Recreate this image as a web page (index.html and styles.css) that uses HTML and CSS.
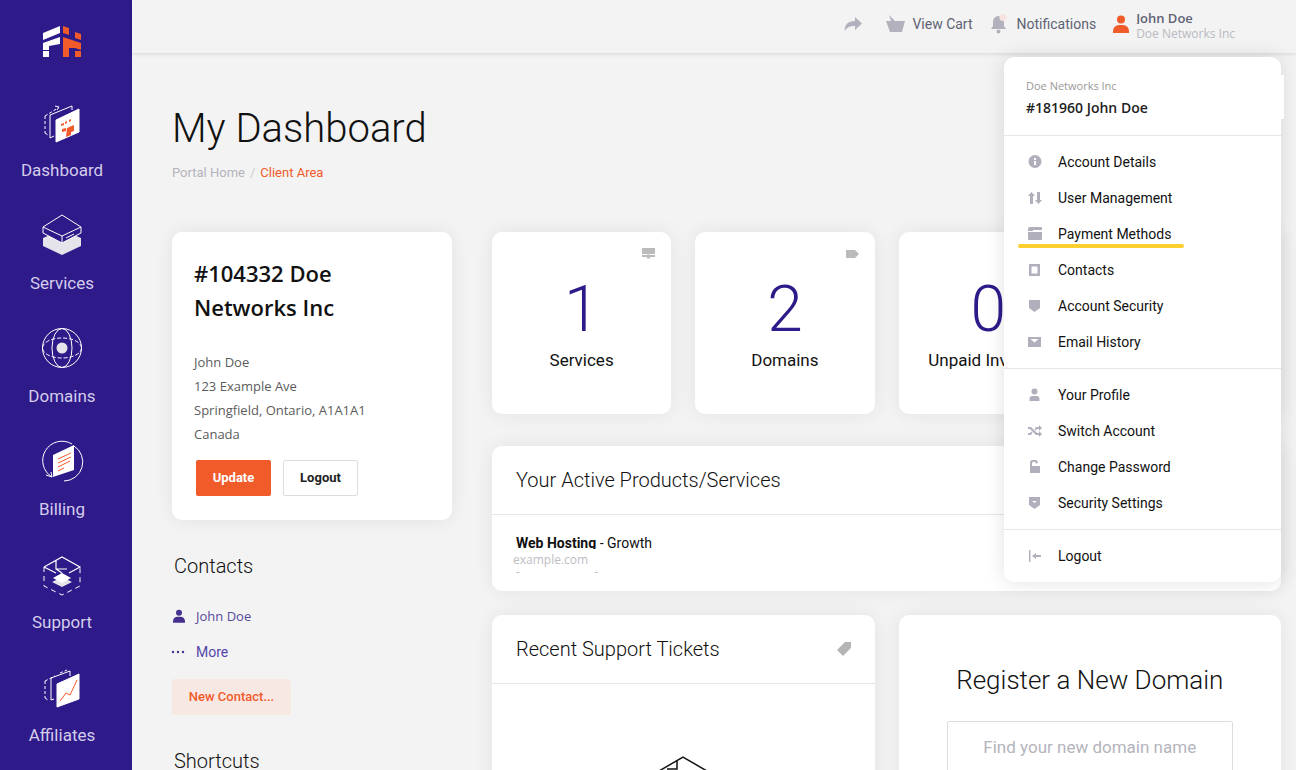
FILE: index.html
```html
<!DOCTYPE html>
<html lang="en">
<head>
  <meta charset="UTF-8">
  <meta name="viewport" content="width=device-width, initial-scale=1">
  <title>My Dashboard</title>
  <link rel="stylesheet" href="styles.css">
</head>
<body>
<div class="layout">

  <aside class="sidebar">
    <svg class="logo" width="40" height="32" viewBox="0 0 40 32">
      <path fill="#fff" d="M1 8 18 1v7L1 15zM1 18l17-6v7L7 21v4H1zM1 26h6v6H1z"/>
      <path fill="#f15a29" d="M21 1l6 2v7l-6-2zM33 7l6 2v6l-6-2zM21 12l18 6v7l-6-2h-12zM21 23h6v9h-6zM33 26h6v6h-6z"/>
    </svg>
    <nav>
      <a class="side-item" href="#">
        <svg width="40" height="40" viewBox="0 0 40 40" fill="none" stroke="#fff" stroke-width="1">
          <path d="M3 13 16 5M3 13v17M3 30l3 2" stroke-dasharray="3 2"/>
          <path d="M13 3l4 1-2 3"/>
          <path d="M8 12 30 3v4M8 12v23l4-2"/>
          <path fill="#fff" d="M14 17 37 6v23L14 39z"/>
          <path fill="#f15a29" stroke="none" d="M19 21l3-1v2l-3 1zM23 19l2-1v2l-2 1zM27 17l2-1v2l-2 1zM20 26l4-1v3l-4 1zM25 25l7-3v6l-3 1v3l-5 2z"/>
        </svg>
        <span>Dashboard</span>
      </a>
      <a class="side-item" href="#">
        <svg width="40" height="40" viewBox="0 0 40 40" fill="none" stroke="#fff" stroke-width="1">
          <path fill="#e4e4ea" stroke="none" d="M1 22 8 19 20 25 32 19 39 22V30L20 39 1 30z"/>
          <path fill="#2f1a8a" d="M1 11 20 -1 39 11V17L20 27 1 17z"/>
          <path d="M1 11 20 20 39 11M20 20v7M24 22l8-4"/>
        </svg>
        <span>Services</span>
      </a>
      <a class="side-item" href="#">
        <svg width="40" height="40" viewBox="0 0 40 40" fill="none" stroke="#fff" stroke-width="1">
          <circle cx="20" cy="19" r="19.500"/>
          <ellipse cx="20" cy="19" rx="10" ry="19.500"/>
          <ellipse cx="20" cy="19" rx="19.500" ry="10" stroke-dasharray="4 2"/>
          <circle cx="20" cy="19" r="5.500" fill="#e4e4ea" stroke="none"/>
        </svg>
        <span>Domains</span>
      </a>
      <a class="side-item" href="#">
        <svg width="40" height="40" viewBox="0 0 40 40" fill="none" stroke="#fff" stroke-width="1">
          <path d="M10 35A19 19 0 0 1 30 2M32 4A19 19 0 0 1 22 39M4 33l6 2 -1-5"/>
          <path fill="#fff" stroke="none" d="M11 13 32 3V28L11 35z"/>
          <path stroke="#f15a29" d="M16 17 29 11M16 21 29 15M16 25 28 19M16 29 22 26"/>
        </svg>
        <span>Billing</span>
      </a>
      <a class="side-item" href="#">
        <svg width="40" height="40" viewBox="0 0 40 40" fill="none" stroke="#fff" stroke-width="1">
          <path d="M2 12V31L20 40 38 31V12" stroke-dasharray="5 4"/>
          <path fill="#e4e4ea" stroke="none" d="M20 22 30 27 20 32 10 27z"/>
          <path fill="#fff" stroke="none" d="M20 18 29 23 20 28 11 23z"/>
          <path stroke-width="1.200" d="M2 12 20 2 38 12 27 18M2 12 14 18M14 5V14L25 14M14 14l6 4"/>
        </svg>
        <span>Support</span>
      </a>
      <a class="side-item" href="#">
        <svg width="40" height="40" viewBox="0 0 40 40" fill="none" stroke="#fff" stroke-width="1">
          <path d="M3 13 13 8M3 13v17M3 30l3 2M18 5l7-3" stroke-dasharray="3 2"/>
          <path d="M9 10 28 3v5M9 10v22l3-1"/>
          <path fill="#fff" d="M15 16 37 6v25L15 39z"/>
          <path stroke="#f15a29" d="M18 33 24 25l4 2 7-15"/>
        </svg>
        <span>Affiliates</span>
      </a>
    </nav>
  </aside>

  <div class="main">
    <header class="topbar">
      <svg class="top-arrow" width="18" height="14" viewBox="0 0 18 14"><path d="M11 0l7 6.500-7 6.500V9C6 9 3 10 1 14 0 8 4 4 11 4z"/></svg>
      <a class="top-link" href="#">
        <svg width="19" height="18" viewBox="0 0 19 18"><path d="M3 0l6 6h10l-3 11H4L0 6h5z"/></svg>
        View Cart
      </a>
      <a class="top-link top-notify" href="#">
        <svg width="18" height="20" viewBox="0 0 18 20"><path d="M8 2a6 6 0 0 0-5 6v4l-2 3h15l-2-3V8a6 6 0 0 0-6-6z"/><circle cx="8.500" cy="17.500" r="2"/><circle cx="13" cy="3.500" r="3.500" fill="#f6e3e0"/></svg>
        Notifications
      </a>
      <a class="top-user" href="#">
        <svg width="16" height="18" viewBox="0 0 16 18"><circle cx="8" cy="4.500" r="4"/><path d="M0 18v-2a6 6 0 0 1 6-6h4a6 6 0 0 1 6 6v2z"/></svg>
        <span class="top-user-text">
          <span class="top-user-name">John Doe</span>
          <span class="top-user-org">Doe Networks Inc</span>
        </span>
      </a>
    </header>

    <div class="content">
      <h1>My Dashboard</h1>
      <div class="breadcrumb">
        <a href="#">Portal Home</a><i>/</i><span>Client Area</span>
      </div>

      <div class="columns">
        <div class="col-left">
          <div class="card client-card">
            <h3>#104332 Doe Networks Inc</h3>
            <p>John Doe<br>123 Example Ave<br>Springfield, Ontario, A1A1A1<br>Canada</p>
            <div class="client-btns">
              <a class="btn btn-orange" href="#">Update</a>
              <a class="btn btn-white" href="#">Logout</a>
            </div>
          </div>

          <h4 class="side-title">Contacts</h4>
          <a class="contact-link" href="#">
            <svg width="12" height="14" viewBox="0 0 16 18"><circle cx="8" cy="4.500" r="4"/><path d="M0 18v-2a6 6 0 0 1 6-6h4a6 6 0 0 1 6 6v2z"/></svg>
            John Doe
          </a>
          <a class="contact-link contact-more" href="#">
            <svg width="14" height="14" viewBox="0 0 14 14"><circle cx="2" cy="7" r="1.200"/><circle cx="7" cy="7" r="1.200"/><circle cx="12" cy="7" r="1.200"/></svg>
            More
          </a>
          <a class="btn-new" href="#">New Contact...</a>

          <h4 class="side-title shortcuts">Shortcuts</h4>
        </div>

        <div class="col-right">
          <div class="stats">
            <div class="card stat">
              <svg class="stat-icon" width="13" height="12" viewBox="0 0 13 12"><path d="M0 0h13v6H0zM0 7h5V6.500H8V7h5v2H8v1.500H5V9H0z"/></svg>
              <div class="stat-num">1</div>
              <div class="stat-label">Services</div>
            </div>
            <div class="card stat">
              <svg class="stat-icon" width="13" height="12" viewBox="0 0 13 12"><path d="M0 2h9l4 4-4 4H0z"/></svg>
              <div class="stat-num">2</div>
              <div class="stat-label">Domains</div>
            </div>
            <div class="card stat">
              <div class="stat-num">0</div>
              <div class="stat-label">Unpaid Invoices</div>
            </div>
            <div class="card stat">
              <div class="stat-num">0</div>
              <div class="stat-label">Tickets</div>
            </div>
          </div>

          <div class="card panel panel-products">
            <div class="panel-head"><h3>Your Active Products/Services</h3></div>
            <div class="product-row">
              <div class="product-name"><b>Web Hosting</b> - Growth</div>
              <div class="product-domain">example.com</div>
              <div class="product-cut"><span>-</span><span>-</span></div>
            </div>
          </div>

          <div class="panel-grid">
            <div class="card panel">
              <div class="panel-head">
                <h3>Recent Support Tickets</h3>
                <svg width="14" height="14" viewBox="0 0 14 14"><path d="M0 8 8 0h6v6l-8 8z" fill="#b5b5b5"/></svg>
              </div>
              <div class="panel-empty">
                <svg width="60" height="40" viewBox="0 0 60 40" fill="none" stroke="#111" stroke-width="1.500"><path d="M1 18 30 1 59 18M24 4v9H14"/></svg>
              </div>
            </div>
            <div class="card panel domain-panel">
              <h2>Register a New Domain</h2>
              <div class="domain-input">Find your new domain name</div>
            </div>
          </div>
        </div>
      </div>
    </div>
  </div>

  <div class="user-menu">
    <div class="menu-head">
      <small>Doe Networks Inc</small>
      <strong>#181960 John Doe</strong>
    </div>
    <ul class="menu-group">
      <li><svg viewBox="0 0 14 14"><path fill-rule="evenodd" d="M7 0a6.500 6.500 0 1 1 0 13A6.500 6.500 0 0 1 7 0zM6 3v2h2V3zM6 6v4h2V6z"/></svg>Account Details</li>
      <li><svg viewBox="0 0 14 14"><path d="M3.500 1 7 5H5v8H2V5H0zM9 1h3v8h2l-3.500 4L7 9h2z"/></svg>User Management</li>
      <li class="marked"><svg viewBox="0 0 14 14"><path d="M2 0h11a1 1 0 0 1 1 1v2H5v1H0V2a2 2 0 0 1 2-2zM0 5h14v7a1 1 0 0 1-1 1H1a1 1 0 0 1-1-1z"/></svg>Payment Methods</li>
      <li><svg viewBox="0 0 14 14"><path fill-rule="evenodd" d="M1 1h11v12H1zM3.500 3.500v7h6v-7z"/></svg>Contacts</li>
      <li><svg viewBox="0 0 14 14"><path d="M1 1h11v8l-5.500 4L1 9z"/></svg>Account Security</li>
      <li><svg viewBox="0 0 14 14"><path fill-rule="evenodd" d="M0 2h13v10H0zM2.500 4l4 3.500 4-3.500z"/></svg>Email History</li>
    </ul>
    <ul class="menu-group">
      <li><svg viewBox="0 0 14 14"><circle cx="6.500" cy="3.500" r="3"/><path d="M1.500 13v-2a3 3 0 0 1 3-3h4a3 3 0 0 1 3 3v2z"/></svg>Your Profile</li>
      <li><svg viewBox="0 0 14 14"><path d="M0 3h3l6 6h2V7l3 3-3 3v-2H8L2 5H0zM11 1l3 3-3 3V5H9L7.500 6.500 6.500 5.500 8 3h3zM0 9h2l1.500-1.500 1 1L3 11H0z"/></svg>Switch Account</li>
      <li><svg viewBox="0 0 14 14"><path d="M2 6V4a4 4 0 0 1 8-1L8 3.500A2 2 0 0 0 4 4v2h8v7H2z"/></svg>Change Password</li>
      <li><svg viewBox="0 0 14 14"><path fill-rule="evenodd" d="M1 1h11v8l-5.500 4L1 9zM4 5h5l-2.500 2z"/></svg>Security Settings</li>
    </ul>
    <ul class="menu-group">
      <li><svg viewBox="0 0 14 14"><path d="M1 1h1.500v12H1zM4 7l4-3v2h5v2H8v2z"/></svg>Logout</li>
    </ul>
  </div>

</div>
</body>
</html>
```

FILE: styles.css
```css
* {
  box-sizing: border-box;
}

html, body {
  margin: 0;
  height: 100%;
  overflow: hidden;
}

body {
  font-family: Roboto, sans-serif;
  background-color: #f3f3f3;
  color: #111;
}

a {
  text-decoration: none;
  color: inherit;
}

.layout {
  display: flex;
  height: 770px;
  overflow: hidden;
  position: relative;
}

/* sidebar */
.sidebar {
  width: 132px;
  flex: none;
  background-color: #2f1a8a;
  padding: 25px 8px 0 0;
  text-align: center;
}

.logo {
  display: block;
  margin: 0 auto 46px;
}

.side-item {
  display: flex;
  flex-direction: column;
  align-items: center;
  margin-bottom: 36px;
  color: #d3cdea;
  font-size: 17px;
  line-height: 20px;
}

.side-item svg {
  display: block;
  margin-bottom: 17px;
  overflow: visible;
}

/* top bar */
.main {
  flex: 1;
  min-width: 0;
}

.topbar {
  height: 53px;
  display: flex;
  align-items: center;
  justify-content: flex-end;
  padding: 0 61px 5px 0;
  background-color: #f3f3f3;
  box-shadow: 0 1px 4px rgba(0,0,0,0.12);
  color: #5e6274;
  font-size: 14px;
  position: relative;
}

.topbar svg {
  fill: #b2b1bd;
  flex: none;
}

.top-arrow {
  margin-right: 24px;
}

.top-link {
  display: flex;
  align-items: center;
  gap: 7px;
  margin-right: 17px;
}

.top-notify {
  gap: 9px;
}

.top-user {
  display: flex;
  align-items: center;
  gap: 7px;
}

.topbar .top-user svg {
  fill: #f15a29;
}

.top-user-text {
  display: block;
  margin-top: 6px;
  font-family: "Open Sans", sans-serif;
}

.top-user-name {
  display: block;
  height: 12px;
  line-height: 13px;
  overflow: hidden;
  font-size: 13px;
  font-weight: 600;
  color: #5e6274;
}

.top-user-org {
  display: block;
  margin-top: 2px;
  font-size: 12px;
  line-height: 16px;
  color: #b9b9c2;
}

/* content */
.content {
  padding: 0 15px 0 40px;
}

h1 {
  margin: 51px 0 0;
  font-size: 40px;
  font-weight: 300;
  line-height: 50px;
  color: #111;
}

.breadcrumb {
  margin-top: 11px;
  font-size: 13px;
  line-height: 16px;
  color: #b4b4bd;
}

.breadcrumb i {
  font-style: normal;
  margin: 0 5px;
  color: #ccc;
}

.breadcrumb span {
  color: #f15a29;
}

.columns {
  display: grid;
  grid-template-columns: 280px 1fr;
  gap: 40px;
  margin-top: 51px;
}

.card {
  background-color: #fff;
  border-radius: 10px;
  box-shadow: 0 0 20px rgba(0,0,0,0.07);
}

/* left column */
.client-card {
  height: 288px;
  padding: 24px 22px;
  font-family: "Open Sans", sans-serif;
}

.client-card h3 {
  margin: 0;
  font-size: 22px;
  font-weight: 600;
  line-height: 34px;
}

.client-card p {
  margin: 26px 0 0;
  font-size: 13px;
  line-height: 24px;
  color: #5c5c5c;
}

.client-btns {
  display: flex;
  gap: 12px;
  margin: 14px 0 0 2px;
}

.btn {
  display: block;
  width: 75px;
  height: 36px;
  line-height: 36px;
  text-align: center;
  font-family: Roboto, sans-serif;
  font-size: 13px;
  font-weight: 700;
  border-radius: 2px;
}

.btn-orange {
  background-color: #f15a29;
  color: #fff;
}

.btn-white {
  background-color: #fff;
  border: 1px solid #ddd;
  line-height: 34px;
  color: #222;
}

.side-title {
  margin: 32px 2px 0;
  font-size: 20px;
  font-weight: 300;
  line-height: 28px;
}

.contact-link {
  display: flex;
  align-items: center;
  gap: 11px;
  margin: 28px 0 0 1px;
  font-size: 13px;
  line-height: 16px;
  font-family: "Open Sans", sans-serif;
  color: #564a9e;
}

.contact-link svg {
  fill: #45308f;
}

.contact-more {
  margin: 20px 0 0 -1px;
  gap: 11px;
  font-family: Roboto, sans-serif;
  font-size: 14px;
  color: #5347ab;
}

.btn-new {
  display: block;
  width: 119px;
  height: 36px;
  margin-top: 19px;
  line-height: 36px;
  text-align: center;
  font-size: 13px;
  font-weight: 500;
  color: #f15a29;
  background-color: #f7e8e4;
  border-radius: 2px;
}

.shortcuts {
  margin-top: 32px;
}

/* right column */
.stats {
  display: grid;
  grid-template-columns: repeat(4, 1fr);
  gap: 24px;
}

.stat {
  height: 182px;
  position: relative;
  text-align: center;
}

.stat-icon {
  position: absolute;
  top: 16px;
  right: 16px;
  fill: #bbb;
}

.stat-num {
  padding-top: 42px;
  font-size: 64px;
  font-weight: 300;
  line-height: 72px;
  color: #2f1a8a;
}

.stat-label {
  margin-top: 2px;
  font-size: 17px;
  line-height: 24px;
}

.panel-products {
  height: 145px;
  margin-top: 32px;
  overflow: hidden;
}

.panel-head {
  display: flex;
  align-items: center;
  justify-content: space-between;
  height: 69px;
  padding: 0 24px;
  border-bottom: 1px solid #e6e6e6;
}

.panel-head h3 {
  margin: 0;
  font-size: 20px;
  font-weight: 300;
}

.product-row {
  padding: 20px 24px 0;
}

.product-name {
  height: 14px;
  line-height: 16px;
  overflow: hidden;
  font-size: 14px;
}

.product-domain {
  margin: 3px 0 0 -3px;
  font-family: "Open Sans", sans-serif;
  font-size: 12px;
  line-height: 16px;
  color: #bdbdc4;
}

.product-cut {
  display: flex;
  justify-content: space-between;
  width: 82px;
  height: 4px;
  margin-top: 2px;
  overflow: hidden;
  font-size: 12px;
  line-height: 4px;
  color: #bdbdc4;
}

.panel-grid {
  display: grid;
  grid-template-columns: 1fr 1fr;
  gap: 24px;
  margin-top: 24px;
}

.panel-grid .card {
  height: 300px;
}

.panel-empty {
  padding-top: 72px;
  text-align: center;
}

.domain-panel {
  padding-top: 48px;
  text-align: center;
}

.domain-panel h2 {
  margin: 0;
  font-size: 26px;
  font-weight: 300;
  line-height: 34px;
}

.domain-input {
  margin: 24px 48px 0;
  height: 52px;
  line-height: 50px;
  border: 1px solid #ddd;
  border-radius: 2px;
  font-size: 17px;
  color: #b4b4bd;
}

/* user dropdown */
.user-menu {
  position: absolute;
  top: 57px;
  left: 1004px;
  width: 277px;
  height: 525px;
  background-color: #fff;
  border-radius: 10px;
  box-shadow: 0 0 20px rgba(0,0,0,0.12);
}

.user-menu::after {
  content: "";
  position: absolute;
  top: 18px;
  right: -3px;
  width: 3px;
  height: 44px;
  background-color: #fff;
}

.menu-head {
  height: 79px;
  padding: 21px 22px 0;
  font-family: "Open Sans", sans-serif;
  border-bottom: 1px solid #e6e6e6;
}

.menu-head small {
  display: block;
  font-size: 11px;
  line-height: 15px;
  color: #999;
}

.menu-head strong {
  display: block;
  margin-top: 6px;
  font-size: 14px;
  font-weight: 600;
  line-height: 18px;
  color: #222;
}

.menu-group {
  list-style: none;
  margin: 0;
  padding: 8px 0;
  border-bottom: 1px solid #e6e6e6;
}

.menu-group:last-child {
  border-bottom: 0;
}

.menu-group li {
  display: flex;
  align-items: center;
  height: 36px;
  padding-left: 24px;
  font-size: 14px;
  position: relative;
}

.menu-group svg {
  width: 14px;
  height: 14px;
  margin-right: 16px;
  fill: #b0afbb;
  flex: none;
}

.marked::after {
  content: "";
  position: absolute;
  left: 14px;
  bottom: 4px;
  width: 166px;
  height: 4px;
  border-radius: 2px;
  background-color: #fdd02f;
}
```
